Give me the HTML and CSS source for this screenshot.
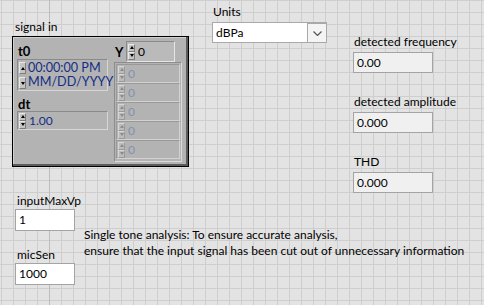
FILE: index.html
```html
<!DOCTYPE html>
<html lang="en">
<head>
  <meta charset="UTF-8" />
  <title>Single Tone Analysis</title>
  <link rel="stylesheet" href="styles.css">
</head>
<body>
  <div class="panel">
    <div class="row-top">
      <div class="col-signal">
        <div class="label">signal in</div>
        <div class="cluster">
          <div class="cl-left">
            <div class="bold-label">t0</div>
            <div class="stamp">
              <div class="stamp-inc">
                <span class="btn"><i class="up"></i></span>
                <span class="btn"><i class="down"></i></span>
              </div>
              <div class="stamp-text">
                <div>00:00:00 PM</div>
                <div>MM/DD/YYYY</div>
              </div>
            </div>
            <div class="bold-label dt">dt</div>
            <div class="num-box">
              <span class="inc"><span class="btn"><i class="up"></i></span><span class="btn"><i class="down"></i></span></span>
              <span class="val">1.00</span>
            </div>
          </div>
          <div class="cl-right">
            <div class="index-row">
              <span class="bold-label y">Y</span>
              <div class="index-box">
                <span class="inc"><span class="btn"><i class="up"></i></span><span class="btn"><i class="down"></i></span></span>
                <span class="val">0</span>
              </div>
            </div>
            <div class="array">
              <div class="elem"><span class="inc off"><span class="btn"><i class="up"></i></span><span class="btn"><i class="down"></i></span></span><span class="val">0</span></div>
              <div class="elem"><span class="inc off"><span class="btn"><i class="up"></i></span><span class="btn"><i class="down"></i></span></span><span class="val">0</span></div>
              <div class="elem"><span class="inc off"><span class="btn"><i class="up"></i></span><span class="btn"><i class="down"></i></span></span><span class="val">0</span></div>
              <div class="elem"><span class="inc off"><span class="btn"><i class="up"></i></span><span class="btn"><i class="down"></i></span></span><span class="val">0</span></div>
              <div class="elem"><span class="inc off"><span class="btn"><i class="up"></i></span><span class="btn"><i class="down"></i></span></span><span class="val">0</span></div>
            </div>
          </div>
        </div>
      </div>

      <div class="col-units">
        <div class="label">Units</div>
        <div class="ring">
          <span>dBPa</span>
          <span class="ring-btn">
            <svg width="9" height="5" viewBox="0 0 9 5"><path d="M0.5 0.5 L4.5 4.5 L8.5 0.5" fill="none" stroke="#555" stroke-width="1.2"/></svg>
          </span>
        </div>
      </div>

      <div class="col-out">
        <div class="label">detected frequency</div>
        <div class="indicator">0.00</div>
        <div class="label">detected amplitude</div>
        <div class="indicator">0.000</div>
        <div class="label">THD</div>
        <div class="indicator">0.000</div>
      </div>
    </div>

    <div class="row-bottom">
      <div class="col-in">
        <div class="label">inputMaxVp</div>
        <div class="control">1</div>
        <div class="label">micSen</div>
        <div class="control">1000</div>
      </div>
      <p class="note">Single tone analysis: To ensure accurate analysis,<br>ensure that the input signal has been cut out of unnecessary information</p>
    </div>
  </div>
</body>
</html>
```

FILE: styles.css
```css
body {
  margin: 0;
  width: 484px;
  height: 305px;
  overflow: hidden;
  font-family: Lato, "Liberation Sans", sans-serif;
  font-size: 12px;
  line-height: 16px;
  color: #000;
  background-color: #e3e3e3;
  background-image:
    linear-gradient(to right, transparent 49px, #bdbdbd 49px, #bdbdbd 50px, transparent 50px),
    linear-gradient(to right, #cecece 1px, transparent 1px),
    linear-gradient(to bottom, #cecece 1px, transparent 1px);
  background-size: 100% 100%, 12px 12px, 12px 12px;
  background-repeat: no-repeat, repeat, repeat;
  background-position: 0 0, 1px 0, 0 0;
}
.row-top {
  display: flex;
  align-items: flex-start;
  height: 191px;
}
.row-bottom {
  display: flex;
  align-items: flex-start;
}
.label {
  height: 16px;
  white-space: nowrap;
}

/* signal in cluster */
.col-signal {
  margin-left: 12px;
  margin-top: 19px;
  width: 177px;
}
.col-signal > .label {
  padding-left: 3px;
  margin-bottom: 1px;
}
.cluster {
  box-sizing: border-box;
  width: 177px;
  height: 131px;
  background: #b3b3b3;
  border: 1px solid #000;
  box-shadow: inset -2px -2px 0 #5c5c5c, inset 1px 1px 0 #d0d0d0;
  display: flex;
  padding: 4px 0 0 4px;
}
.cl-left {
  width: 91px;
  margin-top: 2px;
}
.bold-label {
  font-weight: bold;
  font-size: 13px;
  height: 16px;
  padding-left: 1px;
}
.bold-label.dt {
  margin-top: 5px;
  height: 15px;
}
.stamp {
  box-sizing: border-box;
  height: 32px;
  display: flex;
  border: 1px solid;
  border-color: #8a8a8a #d6d6d6 #d6d6d6 #8a8a8a;
  color: #132e86;
}
.stamp-inc {
  display: flex;
  flex-direction: column;
  justify-content: space-between;
  padding: 2px 0 1px 1px;
}
.stamp-inc .btn {
  height: 12px;
}
.stamp-text {
  padding-left: 2px;
  font-size: 12.6px;
  line-height: 14px;
  margin-top: 1px;
  white-space: nowrap;
}
.num-box {
  box-sizing: border-box;
  height: 19px;
  display: flex;
  align-items: center;
  border: 1px solid;
  border-color: #8a8a8a #d6d6d6 #d6d6d6 #8a8a8a;
  color: #132e86;
}
.inc {
  display: flex;
  flex-direction: column;
  margin-left: 1px;
}
.btn {
  box-sizing: border-box;
  width: 7px;
  height: 8px;
  background: #c4c4c4;
  border: 1px solid;
  border-color: #e8e8e8 #7c7c7c #7c7c7c #e8e8e8;
  display: flex;
  align-items: center;
  justify-content: center;
}
.up, .down {
  width: 0;
  height: 0;
  border-left: 2.5px solid transparent;
  border-right: 2.5px solid transparent;
}
.up {
  border-bottom: 3px solid #000;
}
.down {
  border-top: 3px solid #000;
}
.val {
  padding-left: 3px;
}

.cl-right {
  width: 68px;
  margin-left: 6px;
}
.index-row {
  display: flex;
  align-items: center;
  height: 21px;
}
.bold-label.y {
  width: 11px;
  height: auto;
}
.index-box {
  box-sizing: border-box;
  width: 49px;
  height: 21px;
  display: flex;
  align-items: center;
  background: #bababa;
  border: 1px solid;
  border-color: #8a8a8a #e6e6e6 #e6e6e6 #8a8a8a;
}
.index-box .inc {
  margin-left: 1px;
}
.array {
  box-sizing: border-box;
  height: 100px;
  padding: 1px;
  border: 1px solid;
  border-color: #8c8c8c #dadada #dadada #8c8c8c;
}
.elem {
  box-sizing: border-box;
  height: 19px;
  display: flex;
  align-items: center;
  border: 1px solid;
  border-color: #999 #d2d2d2 #d2d2d2 #999;
  color: #8591ad;
}
.inc.off .btn {
  background: #bcbcbc;
  border-color: #d6d6d6 #9a9a9a #9a9a9a #d6d6d6;
}
.inc.off .up {
  border-bottom-color: #8a8a8a;
}
.inc.off .down {
  border-top-color: #8a8a8a;
}

/* units ring */
.col-units {
  margin-left: 23px;
  margin-top: 4px;
}
.col-units > .label {
  padding-left: 1px;
  margin-bottom: 2px;
}
.ring {
  box-sizing: border-box;
  width: 115px;
  height: 21px;
  background: #fff;
  border: 1px solid #a9a9a9;
  display: flex;
  align-items: center;
  justify-content: space-between;
  padding-left: 3px;
}
.ring-btn {
  box-sizing: border-box;
  width: 19px;
  height: 19px;
  border: 1px solid #a9a9a9;
  border-right: 0;
  border-bottom: 0;
  background: #f4f4f4;
  display: flex;
  align-items: center;
  justify-content: center;
  align-self: flex-end;
}

/* indicators */
.col-out {
  margin-left: 26px;
  margin-top: 34px;
}
.col-out > .label {
  padding-left: 1px;
  margin-bottom: 2px;
}
.indicator {
  box-sizing: border-box;
  width: 80px;
  height: 21px;
  line-height: 19px;
  background: #f0f0f0;
  border: 1px solid #a4a4a4;
  padding-left: 3px;
  margin-bottom: 21px;
}

/* bottom controls */
.col-in {
  margin-left: 15px;
  margin-top: 2px;
  width: 60px;
}
.col-in > .label {
  padding-left: 2px;
}
.control {
  box-sizing: border-box;
  width: 60px;
  height: 22px;
  line-height: 20px;
  background: #fff;
  border: 1px solid #a4a4a4;
  padding-left: 3px;
  margin-bottom: 16px;
}
.note {
  margin: 36px 0 0 9px;
  white-space: nowrap;
}
```
